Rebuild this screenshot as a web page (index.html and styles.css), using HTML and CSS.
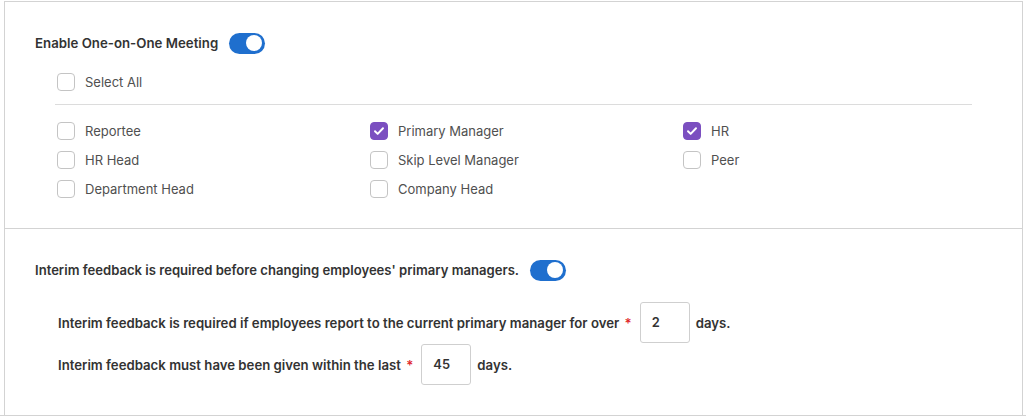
FILE: index.html
```html
<!DOCTYPE html>
<html lang="en">
<head>
<meta charset="utf-8">
<title>Meeting settings</title>
<link rel="stylesheet" href="styles.css">
</head>
<body>
<div class="panel">
  <section class="section">
    <div class="heading-row">
      <span class="heading">Enable One-on-One Meeting</span>
      <span class="toggle on"><span class="knob"></span></span>
    </div>
    <div class="options">
      <label class="check select-all"><span class="box"></span><span class="label">Select All</span></label>
      <div class="divider"></div>
      <div class="grid">
        <label class="check"><span class="box"></span><span class="label">Reportee</span></label>
        <label class="check"><span class="box checked"><svg viewBox="0 0 18 18"><path d="M4.5 9.3l3 3 6-6.4"/></svg></span><span class="label">Primary Manager</span></label>
        <label class="check"><span class="box checked"><svg viewBox="0 0 18 18"><path d="M4.5 9.3l3 3 6-6.4"/></svg></span><span class="label">HR</span></label>
        <label class="check"><span class="box"></span><span class="label">HR Head</span></label>
        <label class="check"><span class="box"></span><span class="label">Skip Level Manager</span></label>
        <label class="check"><span class="box"></span><span class="label">Peer</span></label>
        <label class="check"><span class="box"></span><span class="label">Department Head</span></label>
        <label class="check"><span class="box"></span><span class="label">Company Head</span></label>
      </div>
    </div>
  </section>
  <section class="section second">
    <div class="heading-row">
      <span class="heading long">Interim feedback is required before changing employees' primary managers.</span>
      <span class="toggle on"><span class="knob"></span></span>
    </div>
    <div class="rules">
      <div class="rule">
        <span class="rule-text">Interim feedback is required if employees report to the current primary manager for over <span class="req">*</span></span>
        <span class="num">2</span>
        <span class="rule-text">days.</span>
      </div>
      <div class="rule">
        <span class="rule-text">Interim feedback must have been given within the last <span class="req">*</span></span>
        <span class="num">45</span>
        <span class="rule-text">days.</span>
      </div>
    </div>
  </section>
</div>
<div class="bottom-line"></div>
</body>
</html>
```
FILE: styles.css
```css
html, body {
  margin: 0;
  padding: 0;
  background: #fff;
}

body {
  font-family: Inter, "Liberation Sans", sans-serif;
  color: #333;
  width: 1026px;
  height: 419px;
  overflow: hidden;
}

.panel {
  margin: 1px 3px 0 4px;
  border: 1px solid #d3d3d3;
  border-bottom: none;
}

.section {
  padding: 30px 30px 30px 30px;
}

.section.second {
  border-top: 1px solid #d3d3d3;
}

.heading-row {
  display: flex;
  align-items: center;
  gap: 11px;
  height: 22px;
}

.heading {
  font-size: 13.25px;
  font-weight: 600;
  color: #333;
}

.heading.long {
  font-size: 13.1px;
}

.toggle {
  width: 36px;
  height: 21px;
  border-radius: 11px;
  background: #1f6fce;
  display: flex;
  align-items: center;
  justify-content: flex-end;
  padding: 0 3px;
  box-sizing: border-box;
}

.knob {
  width: 16px;
  height: 16px;
  border-radius: 50%;
  background: #fff;
}

.options {
  padding-left: 20px;
  margin-top: 19px;
  width: 917px;
}

.check {
  display: flex;
  align-items: center;
  gap: 10px;
  height: 18px;
}

.select-all {
  padding-left: 2px;
}

.box {
  width: 18px;
  height: 18px;
  box-sizing: border-box;
  border: 1px solid #c4c4c4;
  border-radius: 4px;
  background: #fff;
  display: flex;
  align-items: center;
  justify-content: center;
}

.box.checked {
  background: #7b4fc0;
  border-color: #7b4fc0;
}

.box svg {
  width: 18px;
  height: 18px;
  fill: none;
  stroke: #fff;
  stroke-width: 2.2;
  stroke-linecap: round;
  stroke-linejoin: round;
}

.label {
  font-size: 13px;
  color: #505050;
}

.divider {
  height: 1px;
  background: #dcdcdc;
  margin-top: 13px;
}

.grid {
  display: grid;
  grid-template-columns: 313px 313px 1fr;
  row-gap: 11px;
  margin-top: 17px;
  padding-left: 2px;
}

.rules {
  padding-left: 23px;
  margin-top: 21px;
  display: flex;
  flex-direction: column;
  gap: 1px;
}

.rule {
  display: flex;
  align-items: center;
  height: 41px;
}

.rule-text {
  font-size: 13.2px;
  font-weight: 600;
  color: #333;
}

.req {
  color: #e0272b;
  margin-left: 2px;
}

.num {
  width: 50px;
  height: 41px;
  box-sizing: border-box;
  border: 1px solid #cfcfcf;
  border-radius: 3px;
  margin: 0 6px 0 8px;
  font-size: 12.9px;
  font-weight: 600;
  color: #333;
  display: flex;
  align-items: center;
  padding-left: 11px;
}

.bottom-line {
  height: 1px;
  background: #d3d3d3;
}
```
